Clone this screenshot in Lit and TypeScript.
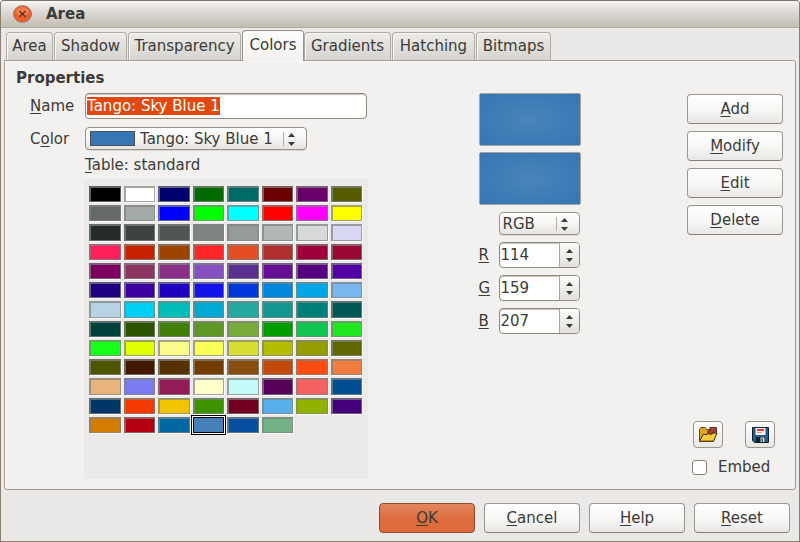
import { LitElement, html, css, svg } from "lit";
import { customElement, state, query } from "lit/decorators.js";
import { classMap } from "lit/directives/class-map.js";
import { styleMap } from "lit/directives/style-map.js";

const TABS = ["Area", "Shadow", "Transparency", "Colors", "Gradients", "Hatching", "Bitmaps"];

const PALETTE = [
  "#000000", "#ffffff", "#00006f", "#006b00", "#006b66", "#6b0000", "#690069", "#575b00",
  "#656a69", "#a4aaa8", "#0000ff", "#00ff00", "#00ffff", "#ff0000", "#ff00ff", "#ffff00",
  "#252b29", "#3c4340", "#505653", "#7e8482", "#959b98", "#b2b8b4", "#d7dad8", "#d8d8f4",
  "#ff1f5a", "#c82200", "#9c4300", "#ff2626", "#e34e22", "#b22e2e", "#9f0039", "#990833",
  "#7d0060", "#8b3560", "#8a3187", "#8650c0", "#59308f", "#650d95", "#560080", "#5300a5",
  "#1f0080", "#3c00a0", "#1f00bd", "#1414ea", "#0037da", "#0087dc", "#00a6e6", "#79b5ee",
  "#b7d3e3", "#00d0f5", "#00bdb9", "#00a9d3", "#26a8a3", "#129792", "#007e79", "#005854",
  "#00413d", "#2c5300", "#427f08", "#5f9825", "#78aa3a", "#009c00", "#10c650", "#20e820",
  "#18ff18", "#e0ff00", "#fafc8a", "#fbff58", "#d8df32", "#b4bd00", "#959e00", "#5f6700",
  "#4e5500", "#421800", "#563000", "#743c00", "#894d10", "#c24a0d", "#ff4d12", "#f17d42",
  "#e9b47c", "#797bee", "#931c56", "#feffcb", "#c3fbf8", "#56005a", "#f56060", "#004f94",
  "#003766", "#f33900", "#f2c300", "#3c9300", "#700022", "#58b0eb", "#91b300", "#43007a",
  "#d57c00", "#b4000e", "#0069a3", "#4780b9", "#084fa2", "#73b286",
];

const CHANNELS = [
  { key: "R", value: 114 },
  { key: "G", value: 159 },
  { key: "B", value: 207 },
];

const up = svg`<path d="M0 4 L3.5 0 L7 4 Z" fill="#3c3b37"/>`;
const down = svg`<path d="M0 0 L7 0 L3.5 4 Z" fill="#3c3b37"/>`;

@customElement("app-root")
export class AppRoot extends LitElement {
  @state() private tab = "Colors";
  @state() private picked = 99;
  @query(".name-field") private nameField!: HTMLInputElement;

  static styles = css`
    :host {
      display: block;
      font: 15px/20px "DejaVu Sans", "Noto Sans", sans-serif;
      color: #3c3b37;
    }
    * { box-sizing: border-box; }
    button, input, select { font: inherit; color: inherit; margin: 0; }
    u { text-underline-offset: 2px; text-decoration-thickness: 1px; }
    .window {
      display: flex;
      flex-direction: column;
      min-height: 100vh;
      background: #ebe9e8;
      border: 1px solid #8a7f72;
      border-top: 1px solid #79756b;
      border-radius: 4px 4px 0 0;
    }
    .titlebar {
      display: flex;
      align-items: center;
      gap: 14px;
      height: 27px;
      padding-left: 12px;
      border-radius: 4px 4px 0 0;
      background: linear-gradient(#f8f7f5, #dfddd9 35%, #c2bdb2);
      border-bottom: 1px solid #b0ab9f;
    }
    .title { margin: 0; font-size: 15px; line-height: 20px; font-weight: 700; }
    .close { width: 19px; height: 18px; padding: 0; border: 0; background: none; display: block; }
    .close svg { display: block; }
    .tabs {
      display: grid;
      grid-template-columns: 48px 74px 114px 62px 88px 84px 76px;
      align-items: end;
      height: 32px;
      padding-left: 5px;
    }
    .tab {
      height: 28px;
      padding: 0 0 2px;
      margin-right: 1px;
      border: 1px solid #b0aca3;
      border-bottom: 0;
      border-radius: 4px 4px 0 0;
      background: linear-gradient(#ecebe9, #d6d4d0);
      box-shadow: inset 1px 1px 0 #f8f7f6;
      white-space: nowrap;
    }
    .tab.active {
      position: relative;
      height: 31px;
      margin: 0 0 -1px;
      padding-bottom: 3px;
      background: linear-gradient(#fdfdfd, #f2f1f0);
      border-color: #98948a;
    }
    .panel {
      flex: 1;
      display: grid;
      grid-template-columns: 356px 1fr 96px;
      margin: 0 3px 0 3px;
      padding: 7px 12px 10px 11px;
      background: #f2f1f0;
      border: 1px solid #a29c90;
      border-radius: 0 3px 3px 3px;
      box-shadow: inset 1px 1px 0 #fbfaf9;
    }
    .heading { margin: 0; font-size: 15px; line-height: 20px; font-weight: 700; }
    .form {
      display: grid;
      grid-template-columns: 55px 282px;
      padding-left: 14px;
      margin-top: 5px;
      row-gap: 8px;
      align-items: center;
    }
    .name-field {
      width: 100%;
      height: 26px;
      padding: 0 1px;
      border: 1px solid #8e8a7e;
      border-radius: 4px;
      background: #fff;
      box-shadow: inset 0 1px 1px #c6c2b8;
      outline: 0;
    }
    .name-field::selection { background: #e2480e; color: #fff; }
    .combo { display: grid; grid-template-columns: 1fr 24px; align-items: center; }
    .combo select {
      grid-area: 1 / 1 / 2 / 3;
      appearance: none;
      width: 100%;
      height: 23px;
      padding: 0 0 0 3px;
      border: 1px solid #98948a;
      border-radius: 4px;
      background: linear-gradient(#fff, #f6f5f4 50%, #e6e4e1);
      box-shadow: 0 1px 0 #d8d5cf;
    }
    .combo svg { grid-area: 1 / 2; pointer-events: none; }
    .combo-color { width: 222px; }
    .combo-color select { padding-left: 54px; }
    .chip {
      grid-area: 1 / 1;
      z-index: 1;
      pointer-events: none;
      width: 45px;
      height: 15px;
      margin-left: 5px;
      background: #3576b3;
      border: 1px solid #46505c;
    }
    .table-label { grid-column: 2; margin-top: -3px; }
    .palette {
      display: grid;
      grid-template: repeat(13, 1fr) / repeat(8, 1fr);
      gap: 3px;
      width: 284px;
      height: 300px;
      margin: 4px 0 0 68px;
      padding: 7px 6px 46px 5px;
      background: #ebeae9;
    }
    .swatch {
      min-width: 0;
      min-height: 0;
      padding: 0;
      border: 2px solid rgba(128, 131, 128, 0.72);
      border-right-width: 1px;
      border-bottom-width: 1px;
      box-shadow: 1px 1px 0 #fafafa;
    }
    .swatch.selected {
      border: 1px solid #000;
      box-shadow: 0 0 0 1px #fff, 0 0 0 2px #000;
    }
    .middle { justify-self: center; width: 102px; padding-top: 25px; }
    .preview {
      height: 53px;
      margin-bottom: 6px;
      border: 1px solid #a5a49c;
      border-radius: 2px;
      background: radial-gradient(#4a84bb, #3576b3);
    }
    .model { width: 81px; margin: 7px 0 7px 20px; }
    .channels { display: grid; grid-template-columns: 20px 81px; row-gap: 7px; align-items: center; }
    .spin {
      display: grid;
      grid-template-columns: 1fr 20px;
      height: 26px;
      border: 1px solid #8e8a7e;
      border-radius: 4px;
      background: #fff;
      overflow: hidden;
      box-shadow: inset 0 1px 1px #c6c2b8;
    }
    .spin input {
      appearance: textfield;
      min-width: 0;
      width: 100%;
      padding: 0 0 0 1px;
      border: 0;
      background: none;
      outline: 0;
    }
    .spin input::-webkit-inner-spin-button { appearance: none; margin: 0; }
    .steps {
      display: grid;
      grid-template-rows: 1fr 1fr;
      padding: 3px 0;
      border-left: 1px solid #a8a499;
      background: linear-gradient(#fbfbfa, #e2e0dc);
    }
    .step { display: grid; place-items: center; padding: 0; border: 0; background: none; }
    .side { display: flex; flex-direction: column; gap: 7px; padding-top: 26px; }
    .btn {
      width: 96px;
      height: 30px;
      padding: 0;
      border: 1px solid #9b978d;
      border-bottom-color: #858177;
      border-radius: 4px;
      background: linear-gradient(#fff, #f8f8f7 50%, #e8e7e5);
    }
    .btn.primary {
      border-color: #8d4a2c;
      background: linear-gradient(#e3865f, #dc6a3c 60%, #df6c3c);
    }
    .files { display: flex; justify-content: space-between; margin: auto 8px 0 6px; }
    .icon-btn {
      display: grid;
      place-items: center;
      width: 30px;
      height: 27px;
      padding: 0;
      border: 1px solid #9b978d;
      border-radius: 4px;
      background: linear-gradient(#fff, #e8e7e5);
    }
    .embed { display: flex; align-items: center; gap: 11px; margin: 2px 0 2px 5px; }
    .embed input {
      appearance: none;
      width: 15px;
      height: 15px;
      border: 1px solid #88847a;
      border-radius: 3px;
      background: #fff;
    }
    .footer { display: flex; justify-content: flex-end; gap: 9px; padding: 13px 9px 8px; }
  `;

  firstUpdated() {
    this.nameField.focus();
    this.nameField.select();
  }

  private btn(label: string, primary = false) {
    return html`<button class=${classMap({ btn: true, primary })}><u>${label[0]}</u>${label.slice(1)}</button>`;
  }

  private arrows() {
    return html`<svg width="16" height="16" aria-hidden="true">
      <path d="M0.5 1V15" stroke="#b5b1a8" />
      <g transform="translate(5 2)">${up}</g>
      <g transform="translate(5 11)">${down}</g>
    </svg>`;
  }

  render() {
    return html`
      <div class="window">
        <header class="titlebar">
          <button class="close" aria-label="Close">
            <svg width="19" height="18" viewBox="0 0 19 18">
              <ellipse cx="9.5" cy="9" rx="9" ry="8.3" fill="#e9602f" stroke="#a5705a" />
              <ellipse cx="9.5" cy="6.5" rx="6.5" ry="4.5" fill="#f38d64" opacity="0.6" />
              <path d="M6.5 6.2L12.5 11.8M12.5 6.2L6.5 11.8" stroke="#55281a" stroke-width="1.3" />
            </svg>
          </button>
          <h1 class="title">Area</h1>
        </header>

        <nav class="tabs" role="tablist">
          ${TABS.map(
            (name) => html`<button
              role="tab"
              aria-selected=${name === this.tab}
              class=${classMap({ tab: true, active: name === this.tab })}
              @click=${() => (this.tab = name)}
            >${name}</button>`
          )}
        </nav>

        <main class="panel">
          <section>
            <h2 class="heading">Properties</h2>
            <div class="form">
              <label for="name"><u>N</u>ame</label>
              <input id="name" class="name-field" type="text" value="Tango: Sky Blue 1" />
              <label for="color">C<u>o</u>lor</label>
              <div class="combo combo-color">
                <select id="color"><option>Tango: Sky Blue 1</option></select>
                <span class="chip"></span>
                ${this.arrows()}
              </div>
              <span class="table-label" id="table-label"><u>T</u>able: standard</span>
            </div>
            <div class="palette" role="group" aria-labelledby="table-label">
              ${PALETTE.map(
                (color, i) => html`<button
                  class=${classMap({ swatch: true, selected: i === this.picked })}
                  style=${styleMap({ backgroundColor: color })}
                  aria-label=${color}
                  @click=${() => (this.picked = i)}
                ></button>`
              )}
            </div>
          </section>

          <section class="middle">
            <div class="preview"></div>
            <div class="preview"></div>
            <div class="combo model">
              <select aria-label="Color model"><option>RGB</option><option>CMYK</option></select>
              ${this.arrows()}
            </div>
            <div class="channels">
              ${CHANNELS.map(
                ({ key, value }) => html`
                  <label for=${key}><u>${key}</u></label>
                  <div class="spin">
                    <input id=${key} type="number" min="0" max="255" value=${value} />
                    <div class="steps">
                      <button class="step" aria-label="Increase ${key}"><svg width="7" height="4">${up}</svg></button>
                      <button class="step" aria-label="Decrease ${key}"><svg width="7" height="4">${down}</svg></button>
                    </div>
                  </div>
                `
              )}
            </div>
          </section>

          <section class="side">
            ${["Add", "Modify", "Edit", "Delete"].map((l) => this.btn(l))}
            <div class="files">
              <button class="icon-btn" aria-label="Load palette">
                <svg width="20" height="17" viewBox="0 0 20 17">
                  <path d="M1.5 15V3.5L3 1.5H7L8.5 3.5H16V14" fill="#e0a51c" stroke="#6b4a0c" />
                  <path d="M1.5 15.5L5 8.5H9L11 7H19L15.5 15.5Z" fill="#f6c93c" stroke="#3d2c08" />
                  <path d="M3 14.8L15 14.8" stroke="#a87810" />
                  <path d="M10 7.5L9.5 5.5L13 3.5L11.5 1.5H18.5V7L16.8 5.5L13 8.5Z" fill="#a8402c" stroke="#4a1c14" stroke-width="0.8" />
                </svg>
              </button>
              <button class="icon-btn" aria-label="Save palette">
                <svg width="17" height="16" viewBox="0 0 17 16">
                  <path d="M0.5 0.5H16.5V15.5H2.5L0.5 13.5Z" fill="#1f5f86" stroke="#0d1f2e" />
                  <rect x="3.5" y="1" width="10" height="7" fill="#f5f3f2" />
                  <rect x="5" y="2" width="7" height="2" fill="#e03a34" />
                  <rect x="5" y="5" width="5" height="1" fill="#d89490" />
                  <rect x="4" y="10" width="9" height="5.5" fill="#10202c" />
                  <rect x="8.5" y="10.5" width="4" height="4.5" fill="#d5dde2" />
                  <rect x="9.5" y="11.5" width="1.5" height="3" fill="#264a62" />
                </svg>
              </button>
            </div>
            <label class="embed"><input type="checkbox" />Embed</label>
          </section>
        </main>

        <footer class="footer">
          ${this.btn("OK", true)} ${["Cancel", "Help", "Reset"].map((l) => this.btn(l))}
        </footer>
      </div>
    `;
  }
}
